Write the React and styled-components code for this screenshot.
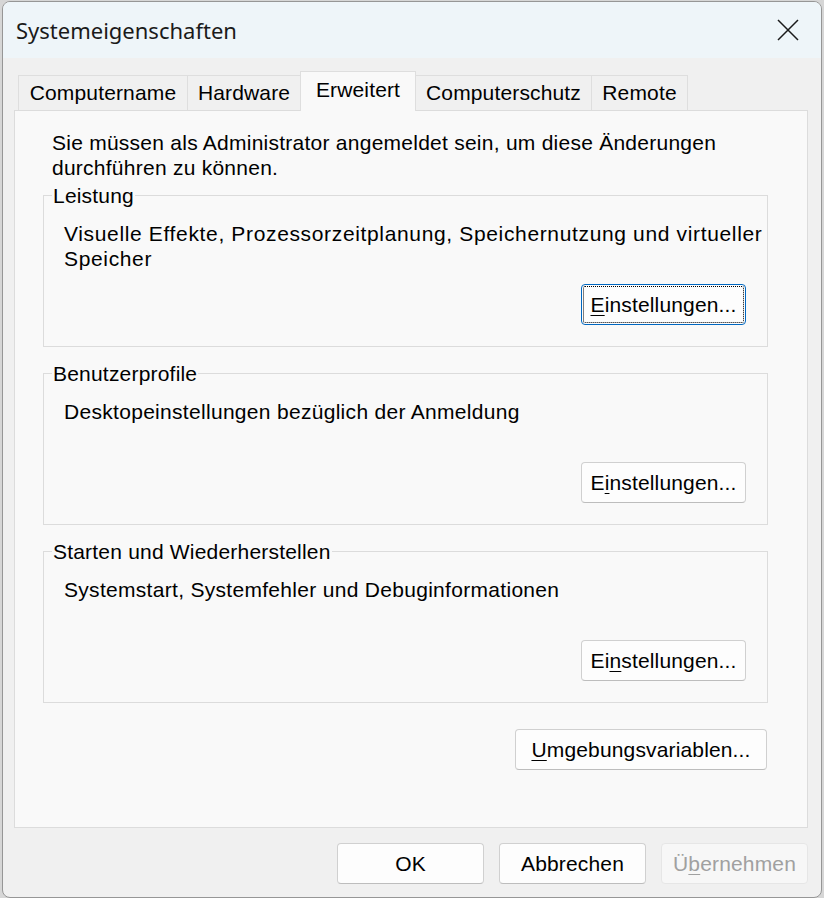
import styled, { createGlobalStyle, css } from "styled-components";

const GlobalStyle = createGlobalStyle`
  html, body {
    margin: 0;
    padding: 0;
    background: #d6d6d6;
  }
  body {
    font-family: "Liberation Sans", Arial, sans-serif;
    color: #000;
  }
`;

const Window = styled.div`
  margin: 1px 0 0 2px;
  width: 820px;
  height: 897px;
  box-sizing: border-box;
  border: 1px solid #969696;
  border-radius: 8px;
  overflow: hidden;
  background: #f0f0f0;
  display: flex;
  flex-direction: column;
`;

const TitleBar = styled.div`
  height: 56px;
  flex: none;
  background: #eef5f9;
  display: flex;
  align-items: center;
  justify-content: space-between;
  padding: 0 22px 0 13px;
`;

const Title = styled.span`
  font-family: "Noto Sans", "Open Sans", sans-serif;
  font-size: 22px;
  color: #1a1a1a;
`;

const CloseIcon = styled.svg`
  width: 22px;
  height: 22px;
  display: block;
`;

const Body = styled.div`
  flex: 1;
  display: flex;
  flex-direction: column;
  padding: 13px 13px 13px 11px;
  min-height: 0;
`;

const TabRow = styled.div`
  display: flex;
  align-items: flex-end;
  height: 39px;
  padding-left: 4px;
  flex: none;
`;

const Tab = styled.div`
  box-sizing: border-box;
  width: ${(p) => p.$w}px;
  height: 35px;
  margin-left: -1px;
  &:first-child {
    margin-left: 0;
  }
  border: 1px solid #dedede;
  border-bottom: none;
  background: #f0f0f0;
  font-size: 21px;
  letter-spacing: 0.15px;
  display: flex;
  align-items: center;
  justify-content: center;
  white-space: nowrap;

  ${(p) =>
    p.$active &&
    css`
      height: 40px;
      margin-bottom: -1px;
      background: #f9f9f9;
      position: relative;
      z-index: 1;
      padding-bottom: 4px;
    `}
`;

const Panel = styled.div`
  flex: 1;
  box-sizing: border-box;
  border: 1px solid #dcdcdc;
  background: #f9f9f9;
  padding: 19px 39px 0 28px;
  display: flex;
  flex-direction: column;
`;

const Note = styled.p`
  margin: 0 0 0 9px;
  font-size: 21px;
  line-height: 25px;
  letter-spacing: 0.25px;
  white-space: nowrap;
`;

const Group = styled.div`
  position: relative;
  box-sizing: border-box;
  height: 152px;
  margin-top: ${(p) => p.$top}px;
  border: 1px solid #dcdcdc;
  padding: 25px 21px 21px 20px;
  display: flex;
  flex-direction: column;
`;

const Legend = styled.span`
  position: absolute;
  top: -13px;
  left: 8px;
  padding: 0 1px;
  background: #f9f9f9;
  font-size: 21px;
  line-height: 25px;
  letter-spacing: 0.2px;
`;

const GroupText = styled.p`
  margin: 0;
  font-size: 21px;
  line-height: 25px;
  white-space: nowrap;
  letter-spacing: ${(p) => p.$track ?? 0.3}px;
`;

const ButtonRow = styled.div`
  display: flex;
  justify-content: flex-end;
  gap: 15px;
  margin-top: ${(p) => (p.$top === "auto" ? "auto" : `${p.$top}px`)};
  padding-right: ${(p) => p.$right || 0}px;
  flex: none;
`;

const Button = styled.button`
  box-sizing: border-box;
  width: ${(p) => p.$w}px;
  height: 41px;
  padding: 0;
  border: 1px solid #d0d0d0;
  border-bottom-color: #bdbdbd;
  border-radius: 4px;
  background: #fdfdfd;
  font-family: "Liberation Sans", Arial, sans-serif;
  font-size: 21px;
  letter-spacing: 0.15px;
  color: #000;
  cursor: default;

  u {
    text-decoration: underline;
    text-underline-offset: 3px;
    text-decoration-thickness: 1px;
  }

  ${(p) =>
    p.$focused &&
    css`
      border-color: #0067c0;
      outline: 1px dotted #000;
      outline-offset: -3px;
    `}

  &:disabled {
    background: #f7f7f7;
    border-color: #e6e6e6;
    color: #a0a0a0;
  }
`;

const Footer = styled.div`
  display: flex;
  justify-content: flex-end;
  gap: 15px;
  margin-top: 15px;
  flex: none;
`;

const tabs = [
  { label: "Computername", w: 170 },
  { label: "Hardware", w: 114 },
  { label: "Erweitert", w: 116, active: true },
  { label: "Computerschutz", w: 177 },
  { label: "Remote", w: 97 },
];

export default function App() {
  return (
    <>
      <GlobalStyle />
      <Window>
        <TitleBar>
          <Title>Systemeigenschaften</Title>
          <CloseIcon viewBox="0 0 22 22">
            <path
              d="M1 1 L21 21 M21 1 L1 21"
              stroke="#1a1a1a"
              strokeWidth="1.5"
              fill="none"
            />
          </CloseIcon>
        </TitleBar>
        <Body>
          <TabRow>
            {tabs.map((t) => (
              <Tab key={t.label} $w={t.w} $active={t.active}>
                {t.label}
              </Tab>
            ))}
          </TabRow>
          <Panel>
            <Note>
              Sie müssen als Administrator angemeldet sein, um diese Änderungen
              <br />
              durchführen zu können.
            </Note>

            <Group $top={15}>
              <Legend>Leistung</Legend>
              <GroupText $track={0.65}>
                Visuelle Effekte, Prozessorzeitplanung, Speichernutzung und
                virtueller
                <br />
                Speicher
              </GroupText>
              <ButtonRow $top="auto">
                <Button $w={165} $focused>
                  <u>E</u>instellungen...
                </Button>
              </ButtonRow>
            </Group>

            <Group $top={26}>
              <Legend>Benutzerprofile</Legend>
              <GroupText>Desktopeinstellungen bezüglich der Anmeldung</GroupText>
              <ButtonRow $top="auto">
                <Button $w={165}>
                  E<u>i</u>nstellungen...
                </Button>
              </ButtonRow>
            </Group>

            <Group $top={26}>
              <Legend>Starten und Wiederherstellen</Legend>
              <GroupText>Systemstart, Systemfehler und Debuginformationen</GroupText>
              <ButtonRow $top="auto">
                <Button $w={165}>
                  Ei<u>n</u>stellungen...
                </Button>
              </ButtonRow>
            </Group>

            <ButtonRow $top={26} $right={1}>
              <Button $w={252}>
                <u>U</u>mgebungsvariablen...
              </Button>
            </ButtonRow>
          </Panel>
          <Footer>
            <Button $w={147}>OK</Button>
            <Button $w={147}>Abbrechen</Button>
            <Button $w={147} disabled>
              Ü<u>b</u>ernehmen
            </Button>
          </Footer>
        </Body>
      </Window>
    </>
  );
}
